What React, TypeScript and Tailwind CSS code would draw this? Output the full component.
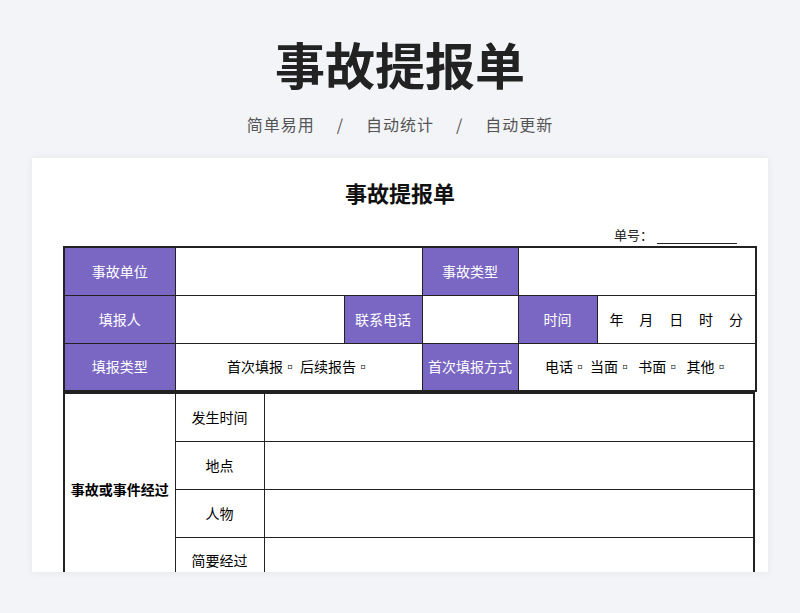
const P = "bg-[#7a67c3] text-white";
const td = "border border-[#222] h-[48px] text-center text-[14px] p-0";

export default function App() {
  return (
    <div className="w-[800px] h-[613px] bg-[#f3f4f7] overflow-hidden" style={{ fontFamily: '"Noto Sans CJK SC", "Noto Sans", sans-serif' }}>
      <div className="pt-[28px] text-center">
        <h1 className="text-[50px] leading-[70px] font-bold text-[#222]">事故提报单</h1>
        <div className="mt-[14px] text-[16px] text-[#555] flex justify-center gap-[22px] tracking-[1px]">
          <span>简单易用</span><span>/</span><span>自动统计</span><span>/</span><span>自动更新</span>
        </div>
      </div>
      <div className="mx-[32px] mt-[22px] h-[414px] bg-white shadow-[0_0_8px_rgba(0,0,0,0.06)] overflow-hidden px-[31px] pt-[18px]">
        <div className="text-center text-[22px] font-bold text-[#111] leading-[32px]">事故提报单</div>
        <div className="flex justify-end items-end mt-[16px] text-[13px] text-[#222] h-[20px]">
          <span>单号：</span><span className="w-[80px] border-b border-[#222] ml-[4px]" />
        </div>
        <table className="w-[692px] mt-[2px] border-collapse border-2 border-[#222] table-fixed">
          <colgroup>
            <col className="w-[111px]" /><col className="w-[169px]" /><col className="w-[78px]" />
            <col className="w-[96px]" /><col className="w-[79px]" /><col className="w-[159px]" />
          </colgroup>
          <tbody>
            <tr>
              <td className={`${td} ${P}`}>事故单位</td>
              <td className={td} colSpan={2}></td>
              <td className={`${td} ${P}`}>事故类型</td>
              <td className={td} colSpan={2}></td>
            </tr>
            <tr>
              <td className={`${td} ${P}`}>填报人</td>
              <td className={td}></td>
              <td className={`${td} ${P}`}>联系电话</td>
              <td className={td}></td>
              <td className={`${td} ${P}`}>时间</td>
              <td className={td}><span className="flex justify-around px-[4px]"><span>年</span><span>月</span><span>日</span><span>时</span><span>分</span></span></td>
            </tr>
            <tr>
              <td className={`${td} ${P}`}>填报类型</td>
              <td className={td} colSpan={2}>首次填报▫ 后续报告▫</td>
              <td className={`${td} ${P}`}>首次填报方式</td>
              <td className={td} colSpan={2}>电话▫ 当面▫ &nbsp;书面▫ &nbsp;其他▫</td>
            </tr>
          </tbody>
        </table>
        <table className="w-[692px] border-collapse border-2 border-t-0 border-[#222] table-fixed">
          <colgroup><col className="w-[111px]" /><col className="w-[89px]" /><col /></colgroup>
          <tbody>
            <tr>
              <td className={`${td} font-bold text-[13px] border-t-2`} rowSpan={4}>事故或事件经过</td>
              <td className={`${td} border-t-2`}>发生时间</td>
              <td className={`${td} border-t-2`}></td>
            </tr>
            <tr><td className={td}>地点</td><td className={td}></td></tr>
            <tr><td className={td}>人物</td><td className={td}></td></tr>
            <tr><td className={td}>简要经过</td><td className={td}></td></tr>
          </tbody>
        </table>
      </div>
    </div>
  );
}
